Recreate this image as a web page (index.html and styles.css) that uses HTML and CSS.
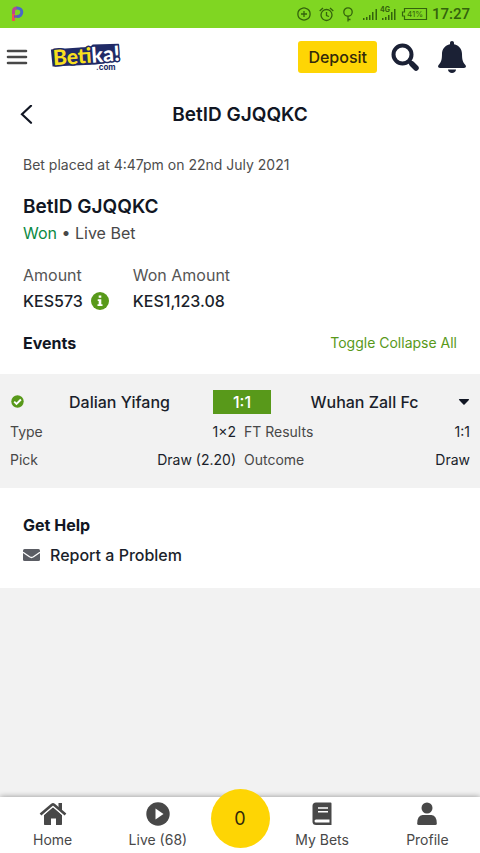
FILE: index.html
```html
<!DOCTYPE html>
<html lang="en">
<head>
<meta charset="utf-8">
<meta name="viewport" content="width=device-width, initial-scale=1">
<title>BetID GJQQKC</title>
<link rel="stylesheet" href="styles.css">
</head>
<body>
<div class="status">
  <svg class="status-app" width="13" height="18" viewBox="0 0 13 18" fill="none" stroke-width="3" aria-hidden="true">
    <path d="M2.500 8v8" stroke="#ef5350"/>
    <path d="M2.500 9V6q0-3 3.500-3" stroke="#b9498f"/>
    <path d="M5.500 3c7-.5 7 8.500.5 8.500" stroke="#4a68c8"/>
    <path d="M6.500 11.500H3" stroke="#7a4fb0" stroke-width="2.500"/>
  </svg>
  <div class="status-icons">
    <svg width="14" height="14" viewBox="0 0 14 14" fill="none" stroke="currentColor" stroke-width="1.300" aria-hidden="true"><path d="M5 1.300a6 6 0 0 0 0 11.400M9 1.300a6 6 0 0 1 0 11.400M5 1.300q2-.7 4 0M5 12.700q2 .7 4 0M4 7h6M7 4v6"/></svg>
    <svg width="15" height="15" viewBox="0 0 15 15" fill="none" stroke="currentColor" stroke-width="1.300" aria-hidden="true"><circle cx="7.500" cy="8" r="5.500"/><path d="M7.500 5v3.500l2.500 1M.7 4 4 1M14.300 4 11 1"/></svg>
    <svg width="12" height="15" viewBox="0 0 12 15" fill="none" stroke="currentColor" stroke-width="1.300" aria-hidden="true"><circle cx="6" cy="5" r="4.200"/><path d="M6 9v5.500M6 12.500h2.500"/></svg>
    <svg class="signal" width="16" height="14" viewBox="0 0 16 14" fill="currentColor" aria-hidden="true"><path d="M1 11h1.500v2H1zM4 10h1.500v3H4zM7 8h1.500v5H7zM10 5h1.500v8H10zM13.500 2H15v11h-1.500z"/></svg>
    <svg class="signal-net" width="18" height="18" viewBox="0 0 18 18" fill="currentColor" aria-hidden="true"><path d="M3 13h1.500v2H3zM6 12h1.500v3H6zM9 10h1.500v5H9zM12 7h1.500v8H12zM15 4h1.500v11H15z"/><text class="net" x="1" y="7">4G</text></svg>
    <svg width="27" height="14" viewBox="0 0 27 14" aria-hidden="true"><path d="M3.500 1.500h22v11h-22V9h-2V5h2z" fill="none" stroke="currentColor" stroke-width="1.200"/><text class="charge" x="6" y="10" fill="currentColor">41%</text></svg>
    <span class="clock">17:27</span>
  </div>
</div>

<header class="topbar">
  <button class="icon-btn" aria-label="Menu">
    <svg width="22" height="18" viewBox="0 0 22 18" stroke="#484848" stroke-width="2.600" stroke-linecap="round"><path d="M2 3h18M2 9h18M2 15h18"/></svg>
  </button>
  <a class="logo" href="#" aria-label="Betika">
    <svg width="74" height="32" viewBox="0 2 74 32">
      <g transform="rotate(-4 38 18)">
        <path d="M2.500 8h40l2-2 26 1v17l-24 2-43.500-1z" fill="#202a66"/>
        <text class="logo-text" x="4" y="24"><tspan fill="#f7df1e">Bet</tspan><tspan fill="#fff">ika!</tspan></text>
      </g>
      <text class="logo-com" x="47" y="31">.com</text>
    </svg>
  </a>
  <button class="deposit">Deposit</button>
  <button class="icon-btn" aria-label="Search">
    <svg width="28" height="28" viewBox="0 0 28 28" fill="none" stroke="#1b2135"><circle cx="11.500" cy="11.500" r="9" stroke-width="4"/><path d="M18.500 18.500l2 2" stroke-width="4"/><path d="M21 21l4 4" stroke-width="5.500" stroke-linecap="round"/></svg>
  </button>
  <button class="icon-btn" aria-label="Notifications">
    <svg width="28" height="32" viewBox="0 0 28 32" fill="#1b2135"><path d="M14 0c1.200 0 2 .8 2 2v1.200c5 1 8 4.800 8 9.800 0 6 1 8.500 3.400 11 1.200 1.400.3 3-1.400 3H2c-1.700 0-2.600-1.600-1.400-3C3 21.500 4 19 4 13c0-5 3-8.800 8-9.800V2c0-1.200.8-2 2-2zM10 28.500h8c0 4.500-8 4.500-8 0z"/></svg>
  </button>
</header>

<main>
  <div class="title-row">
    <button class="icon-btn" aria-label="Back">
      <svg width="14" height="20" viewBox="0 0 14 20" fill="none" stroke="#111623" stroke-width="2.200" stroke-linecap="round"><path d="M12 .8 3 9.300l9 8.500"/></svg>
    </button>
    <h1 class="title">BetID GJQQKC</h1>
  </div>

  <section class="summary">
    <p class="placed">Bet placed at 4:47pm on 22nd July 2021</p>
    <h2 class="bet-id">BetID GJQQKC</h2>
    <p class="state"><span class="won">Won</span> • Live Bet</p>
    <dl class="amounts">
      <div>
        <dt>Amount</dt>
        <dd>KES573
          <svg width="18" height="18" viewBox="0 0 18 18" aria-hidden="true"><circle cx="9" cy="9" r="9" fill="#58991a"/><path d="M7.700 3.500h2.600v2.300H7.700zM6.700 7.200h3.600v5h1.200v1.700H6.500v-1.700h1.200V8.900h-1z" fill="#fff"/></svg>
        </dd>
      </div>
      <div>
        <dt>Won Amount</dt>
        <dd>KES1,123.08</dd>
      </div>
    </dl>
    <div class="events-head">
      <h3>Events</h3>
      <button class="toggle">Toggle Collapse All</button>
    </div>
  </section>

  <section class="event">
    <div class="match">
      <svg width="14" height="14" viewBox="0 0 14 14" aria-hidden="true"><circle cx="7.500" cy="6.500" r="6.200" fill="#58991a"/><path d="M4.200 6.700 6.500 9l4.400-4.500" fill="none" stroke="#fff" stroke-width="1.900"/></svg>
      <span>Dalian Yifang</span>
      <span class="score">1:1</span>
      <span>Wuhan Zall Fc</span>
      <button class="icon-btn" aria-label="Collapse event">
        <svg width="12" height="8" viewBox="0 0 12 8" fill="#111623"><path d="M1.500 1h9q1 .3.400 1L6.600 6.600q-.6.500-1.200 0L1.100 2q-.6-.7.400-1z"/></svg>
      </button>
    </div>
    <dl class="details">
      <div><dt>Type</dt><dd>1×2</dd></div>
      <div><dt>FT Results</dt><dd>1:1</dd></div>
      <div><dt>Pick</dt><dd>Draw (2.20)</dd></div>
      <div><dt>Outcome</dt><dd>Draw</dd></div>
    </dl>
  </section>

  <section class="help">
    <h3>Get Help</h3>
    <a class="report" href="#">
      <svg width="17" height="14" viewBox="0 0 17 14" aria-hidden="true"><rect y="1" width="17" height="12" rx="1.500" fill="#5b5d64"/><path d="M0 4.200l6.500 4.600q2 1.400 4 0L17 4.200" fill="none" stroke="#fff" stroke-width="1.300"/></svg>
      Report a Problem
    </a>
  </section>
</main>

<nav class="tabs">
  <a class="tab" href="#">
    <svg width="28" height="24" viewBox="0 0 28 24" fill="#484848"><path d="M14 5.200 23 13v9.300q0 .7-.7.700H17v-6.500h-5V23H5.700q-.7 0-.7-.7V13z"/><path d="M1.500 12.500 13 2.700q1-.8 2 0l11.500 9.800" fill="none" stroke="#fff" stroke-width="5"/><path d="M1.500 12.500 13 2.700q1-.8 2 0l11.500 9.800" fill="none" stroke="#484848" stroke-width="2.600"/><path d="M19.500 1H23v8l-3.500-3z"/></svg>
    Home
  </a>
  <a class="tab" href="#">
    <svg width="24" height="24" viewBox="0 0 24 24"><circle cx="12" cy="12" r="11.700" fill="#484848"/><path d="M9.500 6.500v11l8-5.500z" fill="#fff"/></svg>
    Live (68)
  </a>
  <button class="slip" aria-label="Betslip, 0 selections">0</button>
  <a class="tab" href="#">
    <svg width="20" height="24" viewBox="0 0 20 24"><path d="M4 .5h14.500q1 0 1 1V23H4q-3.500 0-3.500-3.500V4Q.5.500 4 .5z" fill="#484848"/><path d="M6 6h10M6 9.700h10" stroke="#fff" stroke-width="1.500"/><path d="M4 17.500h13.500v3H4q-1.500 0-1.500-1.500T4 17.500z" fill="#fff"/></svg>
    My Bets
  </a>
  <a class="tab" href="#">
    <svg width="20" height="24" viewBox="0 0 20 24" fill="#484848"><circle cx="10" cy="6" r="5.500"/><path d="M5.500 13h9q5.300.5 5.300 8.500 0 1.500-1.500 1.500H1.700Q.2 23 .2 21.500.2 13.500 5.500 13z"/></svg>
    Profile
  </a>
</nav>
</body>
</html>
```
FILE: styles.css
```css
* {
  box-sizing: border-box;
}

body {
  display: flex;
  flex-direction: column;
  min-height: 100vh;
  margin: 0;
  background: #f2f2f2;
  color: #1b1f2b;
  font: 16px/26px Inter, "Liberation Sans", sans-serif;
}

h1, h2, h3, p, dl, dd {
  margin: 0;
}

button {
  padding: 0;
  border: 0;
  background: none;
  color: inherit;
  font: inherit;
  cursor: pointer;
}

a {
  color: inherit;
  text-decoration: none;
}

svg {
  display: block;
  flex: none;
}

.icon-btn {
  display: flex;
  align-items: center;
  justify-content: center;
}

.status {
  display: flex;
  align-items: center;
  justify-content: space-between;
  height: 28px;
  padding: 0 10px 0 11px;
  background: #80d622;
  color: #33630c;
}

.status-icons {
  display: flex;
  align-items: center;
  gap: 8px;
}

.signal {
  margin-right: -7px;
}

.signal-net {
  margin-right: -4px;
}

.net {
  font-size: 7px;
  font-weight: 700;
}

.charge {
  font-size: 8px;
}

.clock {
  margin-left: -4px;
  font: 500 15px/20px Roboto, sans-serif;
}

.topbar {
  display: flex;
  align-items: center;
  gap: 14px;
  padding: 13px 14px 13px 6px;
  background: #fff;
}

.logo {
  margin: 0 auto 0 7px;
}

.topbar .deposit + .icon-btn {
  margin-right: 5px;
}

.logo-text {
  font-family: Lato, sans-serif;
  font-size: 21px;
  font-weight: 900;
  stroke: #202a66;
  stroke-width: 3px;
  stroke-linejoin: round;
  paint-order: stroke;
}

.logo-com {
  fill: #202a66;
  font-size: 8px;
  font-weight: 700;
}

.deposit {
  height: 32px;
  padding: 0 10px;
  border-radius: 3px;
  background: #fed504;
  color: #32290b;
  font-weight: 500;
}

main {
  background: #fff;
}

.title-row {
  display: grid;
  grid-template-columns: 20px 1fr 20px;
  align-items: center;
  height: 58px;
  padding: 0 16px;
}

.title, .bet-id {
  color: #111623;
  font-size: 19px;
  font-weight: 600;
}

.title {
  text-align: center;
}

.summary {
  padding: 8px 23px 18px;
}

.placed {
  color: #4d4d4d;
  font-size: 14px;
}

.bet-id {
  margin-top: 16px;
}

.state {
  color: #484848;
}

.won {
  color: #0b8a43;
}

.amounts {
  display: flex;
  gap: 24px;
  margin-top: 16px;
}

.amounts dt {
  color: #555;
}

.amounts dd {
  display: flex;
  align-items: center;
  gap: 8px;
  font-weight: 500;
}

.events-head {
  display: flex;
  justify-content: space-between;
  margin-top: 16px;
}

h3 {
  color: #111623;
  font-size: 16px;
  font-weight: 700;
}

.toggle {
  color: #58991a;
  font-size: 14px;
}

.event {
  padding: 16px 10px 14px;
  background: #f2f2f2;
}

.match {
  display: grid;
  grid-template-columns: 16px 1fr 58px 1fr 12px;
  align-items: center;
  margin-bottom: 4px;
  font-weight: 500;
  line-height: 24px;
  text-align: center;
}

.score {
  background: #58991a;
  color: #fff;
}

.details {
  display: grid;
  grid-template-columns: 1fr 1fr;
  column-gap: 8px;
  font-size: 14px;
  line-height: 28px;
}

.details div {
  display: flex;
  justify-content: space-between;
}

.details dt {
  color: #484848;
}

.help {
  padding: 24px 23px 20px;
}

.report {
  display: flex;
  align-items: center;
  gap: 10px;
  margin-top: 4px;
  font-weight: 500;
}

.tabs {
  position: sticky;
  bottom: 0;
  display: grid;
  grid-template-columns: 1fr 1fr 59px 1fr 1fr;
  height: 56px;
  margin-top: auto;
  background: #fff;
  box-shadow: 0 0 6px rgba(0, 0, 0, 0.4);
}

.tab {
  display: flex;
  flex-direction: column;
  align-items: center;
  gap: 4px;
  padding-top: 5px;
  color: #484848;
  font-size: 14px;
  line-height: 20px;
}

.slip {
  height: 59px;
  margin-top: -8px;
  border-radius: 50%;
  background: #fed504;
  color: #32290b;
  font-size: 18px;
}
```
